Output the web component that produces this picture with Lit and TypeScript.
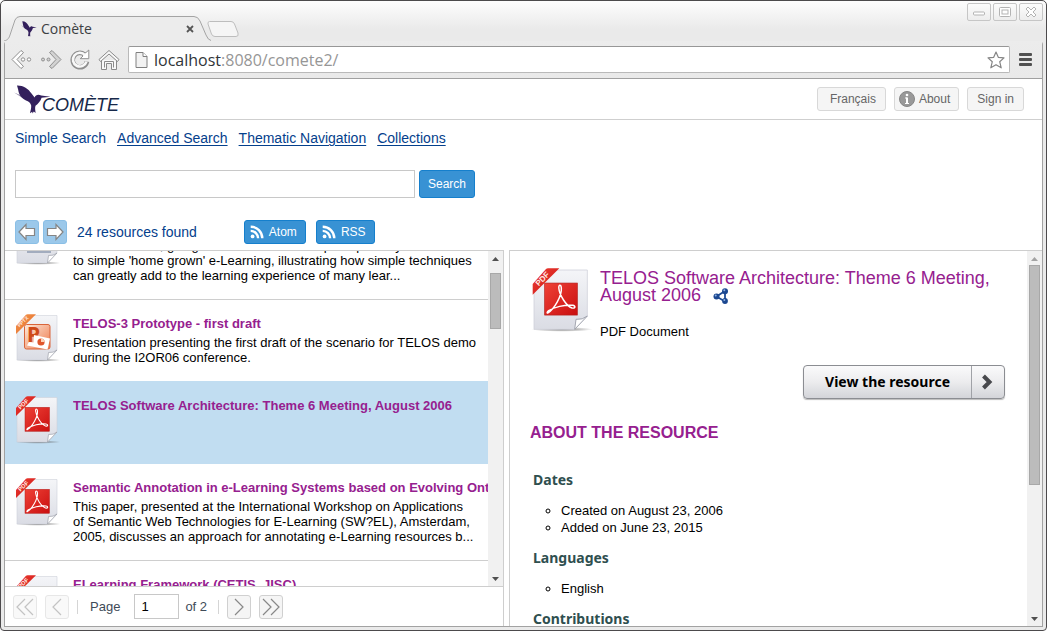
import { LitElement, html, svg, css, nothing } from "lit";
import { customElement, property } from "lit/decorators.js";
import { classMap } from "lit/directives/class-map.js";

type Kind = "pdf" | "pptx" | "text";

interface Resource {
  kind: Kind;
  title: string;
  lines: string[];
  selected?: boolean;
}

const RESOURCES: Resource[] = [
  {
    kind: "text",
    title: "",
    lines: [
      "An introduction, going from the use of a simple repository",
      "to simple 'home grown' e-Learning, illustrating how simple techniques",
      "can greatly add to the learning experience of many lear...",
    ],
  },
  {
    kind: "pptx",
    title: "TELOS-3 Prototype - first draft",
    lines: [
      "Presentation presenting the first draft of the scenario for TELOS demo",
      "during the I2OR06 conference.",
    ],
  },
  {
    kind: "pdf",
    title: "TELOS Software Architecture: Theme 6 Meeting, August 2006",
    lines: [],
    selected: true,
  },
  {
    kind: "pdf",
    title: "Semantic Annotation in e-Learning Systems based on Evolving Ontologies",
    lines: [
      "This paper, presented at the International Workshop on Applications",
      "of Semantic Web Technologies for E-Learning (SW?EL), Amsterdam,",
      "2005, discusses an approach for annotating e-Learning resources b...",
    ],
  },
  { kind: "pdf", title: "ELearning Framework (CETIS, JISC)", lines: [] },
];

const bird = (size: string) => html`
  <svg class=${size} viewBox="0 0 37 29" preserveAspectRatio="none" aria-hidden="true">
    <g fill="#33205c">
      <path d="M3 .6C9 .4 14.500 4 17.500 8.600L20.600 12.400C21.600 9.600 24.500 8.800 27.200 10.600L36.500 11.800L27.600 12.700C26.600 16.200 24 18.800 21.500 20.800C20.700 23 21.400 25.500 21.600 28L19.800 26.600L18.600 28.600L18.200 26.800L16 28.300C16.500 25.500 17.400 23.500 17.200 20.500C16.500 17.600 14.600 16 12 15.400C7.500 13.500 4.600 9 4.200 4.800Z" />
      <path d="M.2 7.600L9 11.200L14 14L8.500 13Z" opacity=".55" />
    </g>
  </svg>`;

const feed = html`
  <svg class="feed" viewBox="0 0 14 14" fill="none" stroke="#fff" stroke-width="2.400" aria-hidden="true">
    <circle cx="2.600" cy="11.400" r="1.900" fill="#fff" stroke="none" />
    <path d="M.7 5.900A7.400 7.400 0 0 1 8.100 13.300M.7 1.700A11.600 11.600 0 0 1 12.300 13.300" />
  </svg>`;

const chevrons = (paths: string) => html`
  <svg class="chev" viewBox="0 0 22 22" fill="none" stroke="#888" stroke-width="1.200" aria-hidden="true">
    <path d=${paths} />
  </svg>`;

@customElement("document-icon")
class DocumentIcon extends LitElement {
  @property() kind: Kind = "pdf";

  static styles = css`
    :host { display: block; }
    svg { display: block; width: 100%; height: 100%; }
    .ribbon { font: bold 6px "Liberation Sans", sans-serif; }
    .ribbon.long { font-size: 5px; }
    .letter { font: bold 21px "Noto Sans", sans-serif; }
  `;

  private art() {
    if (this.kind === "pdf") {
      return svg`
        <rect x="11" y="11.300" width="24.500" height="24" fill="url(#red)" stroke="#b3201c" stroke-width=".5" />
        <path fill="none" stroke="#fff" stroke-width="1.100"
          d="M13.500 33.600C18 31 24 21 23.500 15C23.300 12.300 21.400 12.300 21.600 15C22 20 27 28.500 31.500 30C34.300 30.600 34.300 28.400 32 28C26 27.300 18 29.500 14 32C12.500 33.200 12.600 34.200 13.500 33.600Z" />`;
    }
    if (this.kind === "pptx") {
      return svg`
        <rect x="10.500" y="10.500" width="25.500" height="24.500" rx="2" fill="url(#peach)" stroke="#d9653a" />
        <text class="letter" x="13" y="28" fill="#cf4b1a">P</text>
        <path d="M20 21L36 24.500L33.500 35.500L13 31.500L15 28L19.500 28.500Z" fill="#fff" />
        <circle cx="27" cy="28" r="3.600" fill="#e0562c" />
        <path d="M27 28V24.500A3.600 3.600 0 0 1 30.500 28Z" fill="#fbd2b8" />`;
    }
    return svg`<path d="M13 12H37M13 17H37M13 22H37M13 27H37M13 31.500H37M13 35H37" stroke="#8d9ab0" stroke-width="1.600" />`;
  }

  render() {
    const pptx = this.kind === "pptx";
    const plain = this.kind === "text";
    return html`
      <svg viewBox="0 0 48 48" aria-hidden="true">
        <defs>
          <linearGradient id="paper" x1="0" y1="0" x2="0" y2="1">
            <stop offset="0" stop-color="#f4f5f8" /><stop offset="1" stop-color="#dadce4" />
          </linearGradient>
          <linearGradient id="red" x1="0" y1="0" x2="1" y2="1">
            <stop offset="0" stop-color="#ef4136" /><stop offset="1" stop-color="#c90f10" />
          </linearGradient>
          <linearGradient id="orange" x1="0" y1="0" x2="1" y2="1">
            <stop offset="0" stop-color="#f59a4c" /><stop offset="1" stop-color="#e2662a" />
          </linearGradient>
          <linearGradient id="peach" x1="0" y1="0" x2="1" y2="1">
            <stop offset="0" stop-color="#fdeadb" /><stop offset="1" stop-color="#ee7a4c" />
          </linearGradient>
          <radialGradient id="shade">
            <stop offset="0" stop-color="#555" stop-opacity=".8" /><stop offset="1" stop-color="#555" stop-opacity="0" />
          </radialGradient>
        </defs>
        <ellipse cx="24" cy="46" rx="23" ry="1.800" fill="url(#shade)" />
        <path d=${plain ? "M3 1.500H43V36L33.500 46H3Z" : "M3 13L13 1.500H43V36L33.500 46H3Z"} fill="url(#paper)" stroke="#cfd1da" stroke-width=".6" />
        <path d="M43 36L33.500 46L34.500 38.500Q39.500 39 43 36Z" fill="#fff" stroke="#9da0ab" stroke-width=".7" />
        ${this.art()}
        ${plain
          ? nothing
          : svg`
            <path d="M2 20V12L12 .8Q12.600 .2 13.500 .2H22Z" fill=${pptx ? "url(#orange)" : "url(#red)"} />
            <text class=${pptx ? "ribbon long" : "ribbon"} transform=${pptx ? "translate(5.500 13.500) rotate(-45)" : "translate(6.500 13.800) rotate(-45)"} fill="#ffe9e2">${pptx ? "PPTX" : "PDF"}</text>`}
      </svg>`;
  }
}

@customElement("scroll-rail")
class ScrollRail extends LitElement {
  @property({ type: Number }) before = 0;
  @property({ type: Number }) size = 1;
  @property({ type: Number }) after = 0;
  @property({ type: Boolean }) top = false;

  static styles = css`
    :host { display: flex; flex-direction: column; width: 15px; background: #f1f1f1; }
    svg { display: block; width: 15px; height: 14px; flex: none; }
    .rail { flex: 1; display: flex; flex-direction: column; min-height: 0; padding: 0 2px; }
    .space { flex: 0 1 0; }
    .thumb { background: #bcbcbc; border: 1px solid #a8a8a8; }
  `;

  render() {
    return html`
      <svg viewBox="0 0 15 14"><path d="M4 10L7.500 6L11 10Z" fill=${this.top ? "#a3a3a3" : "#505050"} /></svg>
      <div class="rail">
        <div class="space" style="flex-grow:${this.before}"></div>
        <div class="thumb" style="flex-grow:${this.size}"></div>
        <div class="space" style="flex-grow:${this.after}"></div>
      </div>
      <svg viewBox="0 0 15 14"><path d="M4 5L7.500 9L11 5Z" fill="#505050" /></svg>`;
  }
}

@customElement("browser-frame")
class BrowserFrame extends LitElement {
  static styles = css`
    :host {
      box-sizing: border-box; display: flex; flex-direction: column; height: 100vh;
      padding: 0 3px 3px; border: 1px solid #4c4a4c; border-radius: 5px 5px 4px 4px;
      background: linear-gradient(#fdfdfd, #eaeaea 28px); overflow: hidden;
      font: 14px/20px "Open Sans", "Noto Sans", sans-serif; color: #3c4043;
    }
    button { padding: 0; border: 0; background: none; font: inherit; color: inherit; display: flex; align-items: center; justify-content: center; }
    svg { display: block; flex: none; }
    .strip { display: flex; height: 40px; }
    .tab { position: relative; align-self: flex-end; display: flex; align-items: center; width: 208px; height: 26px; box-sizing: border-box; padding: 1px 16px 0 17px; gap: 4px; }
    .outline { position: absolute; inset: 0; width: 100%; height: 100%; }
    .tab > :not(.outline) { position: relative; }
    .tab-bird { width: 16px; height: 16px; }
    .tab-title { flex: 1; }
    .tab-close { width: 12px; height: 12px; }
    .new-tab { align-self: flex-end; height: 20px; align-items: flex-start; margin-left: -5px; }
    .controls { display: flex; gap: 2px; margin: 2px 0 0 auto; }
    .controls button { width: 24px; height: 18px; border: 1px solid #c6c6c6; border-radius: 2px; background: linear-gradient(#fcfcfc, #ededed); }
    .inner { flex: 1; min-height: 0; display: flex; flex-direction: column; border: solid #a2a2a2; border-width: 0 1px 1px; border-radius: 4px 4px 0 0; }
    .toolbar { display: flex; align-items: center; height: 37px; border-bottom: 1px solid #a0a0a0; padding: 0 10px 0 6px; gap: 7px; background: linear-gradient(#ececec, #e9e9e9); }
    .omnibox { flex: 1; display: flex; align-items: center; height: 27px; box-sizing: border-box; margin: 0 2px 0 1px; padding: 0 4px 0 6px; gap: 6px; border: 1px solid #b9b9b9; border-top-color: #979797; border-radius: 2px; background: #fff; font-size: 16px; line-height: 24px; color: #303438; }
    .url { flex: 1; }
    .path { color: #969696; }
    .page { flex: 1; min-height: 0; display: flex; background: #fff; }
    ::slotted(*) { flex: 1; min-width: 0; }
  `;

  render() {
    return html`
      <div class="strip">
        <div class="tab">
          <svg class="outline" viewBox="0 0 208 26" preserveAspectRatio="none">
            <path d="M0 26C4 25 5 23 6 20L11 5Q12.500 1.500 16 1.500H190Q194 1.500 196 6L202 20Q204 25 207 25.500" fill="#ececec" stroke="#a4a4a4" />
          </svg>
          ${bird("tab-bird")}
          <span class="tab-title">Comète</span>
          <button class="tab-close" aria-label="Close tab">
            <svg width="8" height="8" viewBox="0 0 8 8" stroke="#555" stroke-width="1.800"><path d="M1 1L7 7M7 1L1 7" /></svg>
          </button>
        </div>
        <button class="new-tab" aria-label="New tab">
          <svg width="32" height="16" viewBox="0 0 32 16"><path d="M2.500 .5H24Q26.500 .5 27.500 3L31 12Q32 15.500 29 15.500H8Q5.500 15.500 4.500 13L1 3Q.4 .8 2.500 .5Z" fill="#f5f5f5" stroke="#bdbdbd" /></svg>
        </button>
        <div class="controls">
          <button aria-label="Minimize"><svg width="12" height="10" viewBox="0 0 12 10"><rect x=".5" y="5" width="11" height="3" rx="1" fill="#fff" stroke="#b3b3b3" /></svg></button>
          <button aria-label="Maximize"><svg width="12" height="10" viewBox="0 0 12 10" fill="#fff" stroke="#b3b3b3"><rect x=".5" y=".5" width="11" height="9" rx="1" /><rect x="3" y="3" width="6" height="4" /></svg></button>
          <button aria-label="Close"><svg width="12" height="12" viewBox="0 0 12 12"><path d="M1 3L3 1L6 4L9 1L11 3L8 6L11 9L9 11L6 8L3 11L1 9L4 6Z" fill="#fff" stroke="#b3b3b3" /></svg></button>
        </div>
      </div>
      <div class="inner">
        <div class="toolbar">
          <button aria-label="Back">
            <svg width="22" height="22" viewBox="0 0 22 22" fill="#fff" stroke="#8f8f8f">
              <path d="M10 1.500L12.500 3.500L6 10.500L12.500 17.500L10 19.500L1 10.500Z" /><circle cx="12" cy="10.500" r="1.700" /><circle cx="18" cy="10.500" r="1.700" />
            </svg>
          </button>
          <button aria-label="Forward">
            <svg width="22" height="22" viewBox="0 0 22 22" fill="#d2d2d2" stroke="#8f8f8f">
              <path d="M12 1.500L9.500 3.500L16 10.500L9.500 17.500L12 19.500L21 10.500Z" /><circle cx="3" cy="10.500" r="1.500" /><circle cx="8.500" cy="10.500" r="1.500" />
            </svg>
          </button>
          <button aria-label="Reload">
            <svg width="22" height="22" viewBox="0 0 22 22" fill="none">
              <path d="M18 12.500A7.200 7.200 0 1 1 15.500 5.500" stroke="#8f8f8f" stroke-width="4.600" />
              <path d="M19.800 1V9.700H11.200L14 7L13 5.500L17 3.500Z" fill="#fff" stroke="#8f8f8f" />
              <path d="M17.500 12.500A6.900 6.900 0 1 1 16 6" stroke="#f8f8f8" stroke-width="2.600" />
            </svg>
          </button>
          <button aria-label="Home">
            <svg width="22" height="22" viewBox="0 0 22 22" fill="#f8f8f8" stroke="#8a8a8a">
              <path d="M3.500 11V20.500H8.500V14.500H13.500V20.500H18.500V11" /><path d="M1 10.500L11 1.500L21 10.500L19.500 12.500L11 5L2.500 12.500Z" /><path d="M6.500 18.500V12.500H15.500V18.500" fill="none" />
            </svg>
          </button>
          <div class="omnibox">
            <svg width="13" height="16" viewBox="0 0 13 16" fill="#f2f2f2" stroke="#808080"><path d="M1 .5H8L12 4.500V15.500H1Z" /><path d="M8 .5V4.500H12" fill="#fff" /></svg>
            <span class="url">localhost<span class="path">:8080/comete2/</span></span>
            <svg width="18" height="18" viewBox="0 0 18 18" fill="#fff" stroke="#868686" stroke-width="1.200" stroke-linejoin="round"><path d="M9 1L11.300 6.300L17 6.900L12.700 10.700L14.200 16.800L9 13.700L3.800 16.800L5.300 10.700L1 6.900L6.700 6.300Z" /></svg>
          </div>
          <button aria-label="Menu">
            <svg width="13" height="13" viewBox="0 0 13 13" fill="#505050"><rect width="13" height="3" rx="1" /><rect y="5" width="13" height="3" rx="1" /><rect y="10" width="13" height="3" rx="1" /></svg>
          </button>
        </div>
        <div class="page"><slot></slot></div>
      </div>`;
  }
}

@customElement("comete-app")
class CometeApp extends LitElement {
  static styles = css`
    :host { display: flex; flex-direction: column; min-height: 0; font: 13px/15px "Liberation Sans", Arial, sans-serif; color: #000; }
    h1, h2, h3, p, ul { margin: 0; padding: 0; font-weight: normal; }
    svg { display: block; flex: none; }
    button { box-sizing: border-box; display: flex; align-items: center; justify-content: center; font: 12px/16px "Liberation Sans", Arial, sans-serif; margin: 0; height: 24px; border-radius: 3px; }
    input { box-sizing: border-box; border: 1px solid #c8c8c8; border-radius: 0; background: #fff; font: inherit; color: #000; margin: 0; padding: 0 6px; }

    .top { display: flex; align-items: center; height: 40px; padding: 0 18px 0 9px; border-bottom: 1px solid #cfcfcf; }
    .logo { display: flex; align-items: flex-end; margin-right: auto; text-decoration: none; color: #17294a; font-size: 18px; line-height: 18px; font-style: italic; }
    .logo-bird { width: 37px; height: 29px; margin-right: -9px; }
    .account { display: flex; gap: 8px; }
    .soft { background: #f5f5f5; border: 1px solid #d8d8d8; color: #666; padding: 0 9px; gap: 4px; }
    .language { padding: 0 9px 0 12px; }
    .about { padding: 0 8px 0 4px; }

    .search { padding: 9px 10px 6px; display: flex; flex-direction: column; }
    .modes { display: flex; gap: 11px; font-size: 14px; line-height: 18px; color: #04408c; }
    .modes a { color: inherit; text-decoration: none; text-underline-offset: 2px; }
    .modes a[href] { text-decoration: underline; }
    .query { display: flex; gap: 4px; margin-top: 23px; }
    .query input { width: 400px; height: 28px; }
    .query button { height: 28px; }
    .blue { background: #3892d4; border: 1px solid #157fcc; color: #fff; padding: 0 8px; gap: 5px; }
    .feed { width: 14px; height: 14px; }
    .results { display: flex; align-items: center; margin-top: 22px; }
    .feed-button { padding: 0 8px 0 5px; }
    .history { display: flex; gap: 4px; }
    .step { width: 24px; padding: 0; background: #9bc8ea; border: 1px solid #8abfe6; }
    .count { margin: 0 47px 0 10px; font-size: 14px; line-height: 18px; color: #04408c; }
    .feeds { display: flex; gap: 10px; }

    .panels { flex: 1; min-height: 0; display: grid; grid-template-columns: minmax(0, 499fr) minmax(0, 533fr); grid-template-rows: minmax(0, 1fr); gap: 5px; }
    .left { display: flex; flex-direction: column; border: solid #cecece; border-width: 1px 1px 0 0; }
    .scroll { flex: 1; min-height: 0; display: flex; }
    .list { flex: 1; min-width: 0; overflow-y: auto; overflow-x: hidden; scrollbar-width: none; list-style: none; }
    .item { box-sizing: border-box; display: flex; align-items: flex-start; gap: 11px; min-height: 82px; padding: 14px 0 16px 9px; border-bottom: 1px solid #cecece; }
    .item.flat { border-color: #c1ddf1; }
    .item.selected { background: #c1ddf1; }
    .item document-icon { flex: none; width: 48px; height: 48px; }
    .text { flex: 1; min-width: 0; padding-top: 2px; white-space: nowrap; overflow: hidden; }
    .title { min-height: 15px; font-size: 13px; font-weight: bold; color: #96208f; }
    .desc { margin-top: 4px; white-space: pre; }
    .pager { display: flex; align-items: center; box-sizing: border-box; height: 40px; padding: 0 8px; border-top: 1px solid #cecece; gap: 8px; color: #404b58; }
    .pager button { width: 24px; padding: 0; background: #f5f5f5; border: 1px solid #d0d0d0; }
    .pager button:disabled { opacity: .5; }
    .pager input { width: 45px; height: 25px; margin: 0 6px 0 14px; }
    .bar { width: 1px; height: 14px; background: #d5d5d5; }
    .field { display: flex; align-items: center; margin: 0 3px 0 4px; }
    .chev { width: 22px; height: 22px; }

    .right { display: flex; border: solid #cecece; border-width: 1px 0 0 1px; }
    .detail { flex: 1; min-width: 0; overflow: hidden; padding: 17px 22px 0 20px; line-height: 17px; }
    .head { display: flex; align-items: flex-start; gap: 6px; }
    .head document-icon { flex: none; width: 64px; height: 64px; }
    .head h1 { margin-top: 2px; font-size: 18px; line-height: 17px; color: #96208f; }
    .head h1 svg { display: inline-block; vertical-align: top; margin: 1px 0 0 7px; }
    .head p { margin-top: 19px; }
    .view { margin: 25px 0 0 auto; height: 34px; padding: 0; border: 1px solid #8b8d92; border-radius: 4px; background: linear-gradient(#fafafb, #ececee 50%, #d3d4d9); font: bold 14px/20px "Noto Sans", "Open Sans", sans-serif; color: #000; box-shadow: 0 1px 1px #bbb; }
    .view-text { padding: 0 21px; }
    .view-arrow { display: flex; align-items: center; align-self: stretch; padding: 0 11px 0 10px; border-left: 1px solid #a0a2a7; }
    .detail h2 { margin-top: 24px; font-size: 16px; font-weight: bold; line-height: 20px; color: #96208f; }
    .detail h3 { margin: 13px 0 13px 3px; font: bold 14px/18px "Noto Sans", "Open Sans", sans-serif; color: #2f4f4f; }
    .detail h2 + h3 { margin-top: 28px; }
    .facts { list-style: circle; padding-left: 31px; }
  `;

  firstUpdated() {
    this.renderRoot.querySelector(".list")!.scrollTop = 48;
  }

  private item(r: Resource, i: number) {
    const flat = r.selected || RESOURCES[i + 1]?.selected;
    return html`
      <li class=${classMap({ item: true, selected: !!r.selected, flat: !!flat })}>
        <document-icon kind=${r.kind}></document-icon>
        <div class="text">
          <h3 class="title">${r.title}</h3>
          ${r.lines.length ? html`<p class="desc">${r.lines.join("\n")}</p>` : nothing}
        </div>
      </li>`;
  }

  render() {
    return html`
      <header class="top">
        <a class="logo" href="#">${bird("logo-bird")}<span>COMÈTE</span></a>
        <div class="account">
          <button class="soft language">Français</button>
          <button class="soft about">
            <svg width="16" height="16" viewBox="0 0 16 16"><circle cx="8" cy="8" r="7.500" fill="#999" stroke="#868686" /><rect x="7" y="6.500" width="2" height="6" fill="#fff" /><rect x="6" y="6.500" width="2" height="1" fill="#fff" /><rect x="6" y="12" width="4" height="1" fill="#fff" /><circle cx="8" cy="4" r="1.300" fill="#fff" /></svg>
            About
          </button>
          <button class="soft">Sign in</button>
        </div>
      </header>

      <section class="search">
        <nav class="modes">
          <a aria-current="page">Simple Search</a>
          <a href="#advanced">Advanced Search</a>
          <a href="#thematic">Thematic Navigation</a>
          <a href="#collections">Collections</a>
        </nav>
        <form class="query" @submit=${(e: Event) => e.preventDefault()}>
          <input type="text" aria-label="Search" />
          <button class="blue">Search</button>
        </form>
        <div class="results">
          <div class="history">
            <button class="step" aria-label="Previous results"><svg width="18" height="18" viewBox="0 0 18 18" fill="#fff" stroke="#858585" stroke-width="1.200"><path d="M1 9L8 1.500V5.500H16.500V12.500H8V16.500Z" /></svg></button>
            <button class="step" aria-label="Next results"><svg width="18" height="18" viewBox="0 0 18 18" fill="#fff" stroke="#858585" stroke-width="1.200"><path d="M17 9L10 1.500V5.500H1.500V12.500H10V16.500Z" /></svg></button>
          </div>
          <span class="count">24 resources found</span>
          <div class="feeds">
            <button class="blue feed-button">${feed}Atom</button>
            <button class="blue feed-button">${feed}RSS</button>
          </div>
        </div>
      </section>

      <main class="panels">
        <section class="left">
          <div class="scroll">
            <ul class="list">${RESOURCES.map((r, i) => this.item(r, i))}</ul>
            <scroll-rail .before=${8} .size=${54} .after=${243}></scroll-rail>
          </div>
          <div class="pager">
            <button disabled aria-label="First page">${chevrons("M11 3L3 11L11 19M19 3L11 11L19 19")}</button>
            <button disabled aria-label="Previous page">${chevrons("M15 3L7 11L15 19")}</button>
            <span class="bar"></span>
            <div class="field"><label for="page">Page</label><input id="page" type="text" value="1" />of 2</div>
            <span class="bar"></span>
            <button aria-label="Next page">${chevrons("M7 3L15 11L7 19")}</button>
            <button aria-label="Last page">${chevrons("M3 3L11 11L3 19M11 3L19 11L11 19")}</button>
          </div>
        </section>

        <section class="right">
          <article class="detail">
            <div class="head">
              <document-icon kind="pdf"></document-icon>
              <div>
                <h1>TELOS Software Architecture: Theme 6 Meeting, August 2006
                  <svg width="16" height="16" viewBox="0 0 16 16"><path d="M12 3L3.500 8.500L12 13.500M12 3V13" fill="none" stroke="#1e4b95" stroke-width="1.800" /><g fill="#1b4790"><circle cx="12" cy="3.200" r="3" /><circle cx="3.500" cy="8.500" r="3" /><circle cx="12" cy="13" r="2.900" /></g><g fill="#8fb2e3"><circle cx="11.300" cy="2.200" r="1" /><circle cx="2.700" cy="7.500" r="1" /><circle cx="11.300" cy="12" r="1" /></g></svg>
                </h1>
                <p>PDF Document</p>
              </div>
            </div>
            <button class="view">
              <span class="view-text">View the resource</span>
              <span class="view-arrow"><svg width="11" height="16" viewBox="0 0 11 16" fill="none" stroke="#48494d" stroke-width="4"><path d="M1.500 2L7.500 8L1.500 14" /></svg></span>
            </button>
            <h2>ABOUT THE RESOURCE</h2>
            <h3>Dates</h3>
            <ul class="facts"><li>Created on August 23, 2006</li><li>Added on June 23, 2015</li></ul>
            <h3>Languages</h3>
            <ul class="facts"><li>English</li></ul>
            <h3>Contributions</h3>
          </article>
          <scroll-rail top .before=${0} .size=${218} .after=${127}></scroll-rail>
        </section>
      </main>`;
  }
}

@customElement("app-root")
class AppRoot extends LitElement {
  static styles = css`:host { display: block; background: #fff; }`;

  render() {
    return html`<browser-frame><comete-app></comete-app></browser-frame>`;
  }
}
